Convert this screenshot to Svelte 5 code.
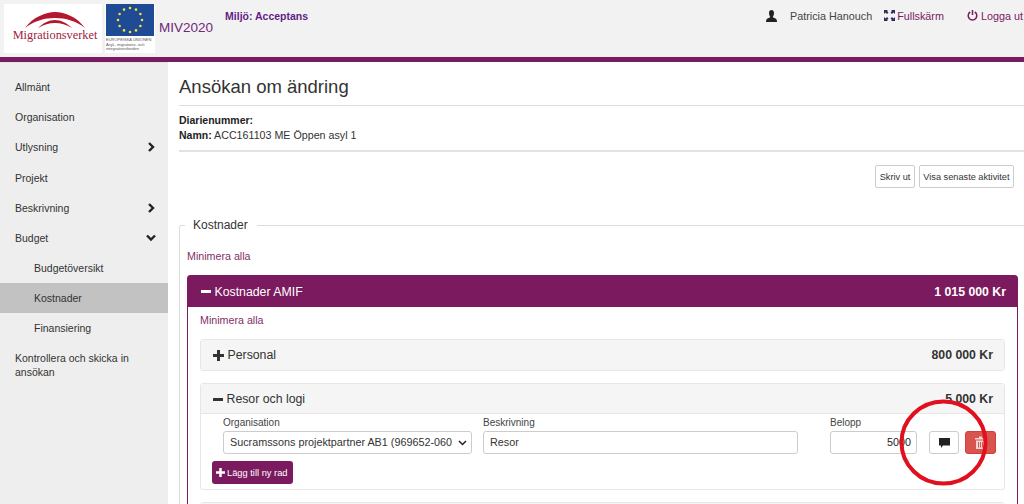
<script>
  const menu = [
    { label: 'Allmänt' },
    { label: 'Organisation' },
    { label: 'Utlysning', arrow: 'right' },
    { label: 'Projekt' },
    { label: 'Beskrivning', arrow: 'right' },
    { label: 'Budget', arrow: 'down' },
    { label: 'Budgetöversikt', sub: true },
    { label: 'Kostnader', sub: true, active: true },
    { label: 'Finansiering', sub: true },
    { label: 'Kontrollera och skicka in ansökan' }
  ];

  const stars = Array.from({ length: 12 }, (_, i) => {
    const a = (i * Math.PI) / 6;
    return { x: 24 + Math.sin(a) * 12, y: 16 - Math.cos(a) * 12 };
  });
</script>

<div class="page">
  <header>
    <div class="logo">
      <svg width="62" height="16" viewBox="0 0 62 16">
        <path d="M1 16 C9 5 22 0 31 0 C41 0 53 5 61 16 C52 9 42 6 31 6 C20 6 10 9 1 16Z" fill="#b3182f" />
        <path d="M14 16 C19 11 25 8 31 8 C37 8 43 11 48 16 C42 12.500 37 11 31 11 C25 11 20 12.500 14 16Z" fill="#b3182f" />
      </svg>
      <span>Migrationsverket</span>
    </div>
    <div class="eu">
      <svg width="48" height="32" viewBox="0 0 48 32">
        <rect width="48" height="32" fill="#1f4a94" />
        {#each stars as s}
          <circle cx={s.x} cy={s.y} r="1.300" fill="#f3e03a" />
        {/each}
      </svg>
      <small>EUROPEISKA UNIONEN<br />Asyl-, migrations- och<br />integrationsfonden</small>
    </div>
    <div class="app">MIV2020</div>
    <div class="env">Miljö: Acceptans</div>
    <div class="user">
      <svg class="person" width="11" height="12" viewBox="0 0 11 12">
        <path d="M3 3 C3 1 4 0 5.500 0 C7 0 8 1 8 3 C8 5 7.300 6 6.800 6.800 C6.800 7.600 8 7.900 9.500 8.500 C10.500 9 11 10 11 12 L0 12 C0 10 .5 9 1.500 8.500 C3 7.900 4.200 7.600 4.200 6.800 C3.700 6 3 5 3 3Z" fill="#222" />
      </svg>
      <span class="name">Patricia Hanouch</span>
      <a class="full">
        <svg width="11" height="11" viewBox="0 0 11 11" fill="#33275e">
          <path d="M0 0H4L3 1L4.500 2.500L3 4L1.500 2.500L0 4Z" />
          <path d="M11 0H7L8 1L6.500 2.500L8 4L9.500 2.500L11 4Z" />
          <path d="M0 11H4L3 10L4.500 8.500L3 7L1.500 8.500L0 7Z" />
          <path d="M11 11H7L8 10L6.500 8.500L8 7L9.500 8.500L11 7Z" />
        </svg>
        Fullskärm
      </a>
      <a class="out">
        <svg width="11" height="11" viewBox="0 0 11 11" fill="none" stroke="#7b1a5e" stroke-width="1.500">
          <path d="M3.200 2 A4.300 4.300 0 1 0 7.800 2" />
          <path d="M5.500 0V5" />
        </svg>
        Logga ut
      </a>
    </div>
  </header>

  <div class="layout">
    <nav>
      {#each menu as item}
        <div class="item" class:sub={item.sub} class:active={item.active}>
          <span>{item.label}</span>
          {#if item.arrow === 'right'}
            <svg width="8" height="10" viewBox="0 0 8 10"><path d="M1 1L5 5L1 9" fill="none" stroke="#222" stroke-width="2.400" /></svg>
          {:else if item.arrow === 'down'}
            <svg width="10" height="8" viewBox="0 0 10 8"><path d="M1 1.500L5 5.500L9 1.500" fill="none" stroke="#222" stroke-width="2.400" /></svg>
          {/if}
        </div>
      {/each}
    </nav>

    <main>
      <h1>Ansökan om ändring</h1>
      <div class="meta">
        <div><b>Diarienummer:</b></div>
        <div><b>Namn:</b> ACC161103 ME Öppen asyl 1</div>
      </div>
      <div class="actions">
        <button>Skriv ut</button>
        <button>Visa senaste aktivitet</button>
      </div>

      <fieldset>
        <legend>Kostnader</legend>
        <a class="min">Minimera alla</a>
        <section class="amif">
          <div class="amif-head">
            <span class="title"><i class="minus white"></i>Kostnader AMIF</span>
            <b>1 015 000 Kr</b>
          </div>
          <div class="amif-body">
            <a class="min">Minimera alla</a>
            <div class="panel closed">
              <div class="panel-head">
                <span class="title">
                  <svg width="11" height="11" viewBox="0 0 11 11"><path d="M4 0H7V4H11V7H7V11H4V7H0V4H4Z" fill="#333" /></svg>
                  Personal
                </span>
                <b>800 000 Kr</b>
              </div>
            </div>
            <div class="panel">
              <div class="panel-head">
                <span class="title"><i class="minus"></i>Resor och logi</span>
                <b>5 000 Kr</b>
              </div>
              <div class="panel-body">
                <div class="row">
                  <label class="org">
                    Organisation
                    <span class="select">
                      <span>Sucramssons projektpartner AB1 (969652-060</span>
                      <svg width="9" height="6" viewBox="0 0 9 6"><path d="M1 1L4.500 4.500L8 1" fill="none" stroke="#222" stroke-width="1.500" /></svg>
                    </span>
                  </label>
                  <label class="desc">
                    Beskrivning
                    <span class="input">Resor</span>
                  </label>
                  <label class="amount">
                    Belopp
                    <span class="input num">5000</span>
                  </label>
                  <button class="icon">
                    <svg width="13" height="12" viewBox="0 0 13 12"><path d="M1 1H12V8.500H5L3 11V8.500H1Z" fill="#222" /></svg>
                  </button>
                  <button class="icon del">
                    <svg width="11" height="13" viewBox="0 0 11 13" fill="#f3d5d4">
                      <path d="M0 2H4V.5H7V2H11V3.500H0Z" />
                      <path d="M1 4.500H10V13H1ZM3 6V11.500H4V6ZM5 6V11.500H6V6ZM7 6V11.500H8V6Z" fill-rule="evenodd" />
                    </svg>
                  </button>
                </div>
                <button class="add">
                  <svg width="9" height="9" viewBox="0 0 11 11"><path d="M4 0H7V4H11V7H7V11H4V7H0V4H4Z" fill="#fff" /></svg>
                  Lägg till ny rad
                </button>
              </div>
            </div>
            <div class="panel closed"><div class="panel-head"></div></div>
          </div>
        </section>
      </fieldset>
    </main>
  </div>

  <svg class="ring" width="92" height="90" viewBox="0 0 92 90">
    <ellipse cx="45.500" cy="44.500" rx="42" ry="41" fill="none" stroke="#e0101f" stroke-width="4" />
  </svg>
</div>

<style>
  :global(body) {
    margin: 0;
    background: #fff;
  }

  .page {
    position: relative;
    width: 1024px;
    height: 504px;
    overflow: hidden;
    font-family: 'Liberation Sans', Arial, sans-serif;
    font-size: 10.500px;
    color: #333;
  }

  a {
    color: #7b1a5e;
  }

  header {
    display: flex;
    height: 57px;
    box-sizing: border-box;
    padding: 4px 0 0 4px;
    background: #f2f2f2;
    position: relative;
  }

  .logo {
    width: 98px;
    height: 49px;
    background: #fff;
    display: flex;
    flex-direction: column;
    align-items: center;
    padding-top: 8px;
    box-sizing: border-box;
    flex: none;
  }

  .logo svg {
    display: block;
    margin-left: 4px;
  }

  .logo span {
    font-family: 'Liberation Serif', serif;
    font-size: 12.300px;
    line-height: 14px;
    color: #a3213f;
    margin-left: 4px;
  }

  .eu {
    width: 50px;
    height: 49px;
    margin-left: 3px;
    background: #fff;
    flex: none;
  }

  .eu svg {
    display: block;
    margin-left: 1px;
  }

  .eu small {
    display: block;
    font-size: 4px;
    line-height: 4.500px;
    color: #555;
    margin: 2px 0 0 1px;
    white-space: nowrap;
  }

  .app {
    margin: 16px 0 0 4px;
    font-size: 13.500px;
    line-height: 16px;
    color: #6f2a78;
  }

  .env {
    margin: 6px 0 0 12px;
    font-size: 10.500px;
    line-height: 13px;
    font-weight: bold;
    color: #5f1f86;
  }

  .user {
    margin-left: auto;
    display: flex;
    align-items: center;
    height: 13px;
    margin-top: 5px;
    padding-right: 1px;
    font-size: 10.800px;
  }

  .person {
    margin-right: 13px;
  }

  .name {
    margin-right: 12px;
    color: #444;
  }

  .full {
    display: flex;
    align-items: center;
    gap: 2px;
    margin-right: 23px;
  }

  .out {
    display: flex;
    align-items: center;
    gap: 3px;
  }

  .layout {
    display: flex;
    border-top: 5px solid #7b1a5e;
    height: 442px;
  }

  nav {
    width: 168px;
    flex: none;
    background: #eee;
    padding-top: 8.700px;
    border-top: 1px solid #e3e3e3;
    box-sizing: border-box;
  }

  .item {
    display: flex;
    justify-content: space-between;
    align-items: center;
    min-height: 30.300px;
    padding: 0 12px 0 15px;
    line-height: 14px;
    box-sizing: border-box;
    color: #333;
  }

  .item:last-child {
    padding-top: 8px;
    padding-right: 30px;
  }

  .item svg {
    flex: none;
  }

  .sub {
    min-height: 29.700px;
    padding-left: 34px;
  }

  .active {
    background: #c2c2c2;
  }

  main {
    flex: 1;
    padding: 14px 0 0 11px;
    min-width: 0;
  }

  h1 {
    margin: 0;
    font-size: 18.500px;
    line-height: 22px;
    font-weight: normal;
    color: #333;
    padding-bottom: 7px;
    border-bottom: 1px solid #ddd;
  }

  .meta {
    padding: 7px 0 7px;
    font-size: 10.700px;
    line-height: 15px;
    border-bottom: 2px solid #e2e2e2;
  }

  .meta b {
    font-size: 10.500px;
    color: #222;
  }

  .actions {
    display: flex;
    justify-content: flex-end;
    gap: 4px;
    padding: 13px 10px 0 0;
  }

  .actions button {
    height: 23px;
    padding: 0 3.500px;
    font: 9.200px 'Liberation Sans', Arial, sans-serif;
    color: #333;
    background: #fff;
    border: 1px solid #ccc;
    border-radius: 2px;
  }

  fieldset {
    margin: 30px -10px 0 0;
    padding: 17px 7px 0 7px;
    border: 1px solid #ddd;
    border-radius: 2px;
    min-width: 0;
  }

  legend {
    margin-left: -2px;
    padding: 0 9px 0 8px;
    font-size: 12px;
    line-height: 14px;
    color: #333;
  }

  .min {
    display: block;
    font-size: 10.700px;
    line-height: 14px;
    color: #803068;
  }

  .amif {
    margin-top: 12px;
    margin-right: 8px;
    border: 1px solid #7b1a5e;
    border-radius: 3px 3px 0 0;
  }

  .amif-head {
    display: flex;
    justify-content: space-between;
    align-items: center;
    height: 31px;
    padding: 0 11px 0 13px;
    background: #7b1a5e;
    color: #fff;
    font-size: 12.300px;
  }

  .title {
    display: flex;
    align-items: center;
    gap: 2.500px;
    font-size: 12.300px;
  }

  .title svg {
    margin-right: 1px;
  }

  .minus {
    display: inline-block;
    width: 10px;
    height: 3px;
    background: #333;
    margin-right: 1px;
  }

  .minus.white {
    background: #fff;
  }

  .amif-body {
    padding: 6px 12px 0 12px;
  }

  .panel {
    margin-top: 12px;
    border: 1px solid #e6e6e6;
    border-radius: 3px;
  }

  .panel-head {
    display: flex;
    justify-content: space-between;
    align-items: center;
    height: 30px;
    padding: 0 11px 0 12px;
    background: #f5f5f5;
    font-size: 12.300px;
  }

  .panel-head b {
    color: #333;
  }

  .panel-body {
    margin-top: -1px;
    border-top: 1px solid #e6e6e6;
    padding: 2px 8px 6px 11px;
    height: 76px;
    box-sizing: border-box;
  }

  .row {
    display: flex;
    align-items: flex-end;
    padding-left: 11px;
  }

  label {
    display: flex;
    flex-direction: column;
    gap: 2px;
    font-size: 10px;
    line-height: 13px;
    color: #444;
  }

  .select,
  .input {
    display: flex;
    align-items: center;
    height: 23px;
    box-sizing: border-box;
    border: 1px solid #ccc;
    border-radius: 3px;
    background: #fff;
    font-size: 10.800px;
    color: #333;
    padding: 0 6px;
  }

  .select {
    justify-content: space-between;
    white-space: nowrap;
    overflow: hidden;
    padding-right: 4px;
  }

  .org {
    width: 249px;
  }

  .desc {
    width: 315px;
    margin-left: 11px;
  }

  .amount {
    width: 87px;
    margin-left: 32px;
  }

  .num {
    justify-content: flex-end;
    color: #222;
    padding-right: 5px;
  }

  .icon {
    width: 30px;
    height: 23px;
    margin-left: 12px;
    padding: 0;
    display: flex;
    align-items: center;
    justify-content: center;
    background: #fff;
    border: 1px solid #ccc;
    border-radius: 3px;
  }

  .del {
    width: 31px;
    margin-left: 6px;
    background: #d9534f;
    border-color: #d43f3a;
  }

  .add {
    display: flex;
    align-items: center;
    gap: 2px;
    height: 23px;
    width: 81px;
    margin-top: 7px;
    padding: 0 0 0 4px;
    background: #7b1a5e;
    border: 0;
    border-radius: 3px;
    color: #fff;
    font: 9.300px 'Liberation Sans', Arial, sans-serif;
    white-space: nowrap;
  }

  .ring {
    position: absolute;
    left: 898px;
    top: 398px;
    pointer-events: none;
  }
</style>
